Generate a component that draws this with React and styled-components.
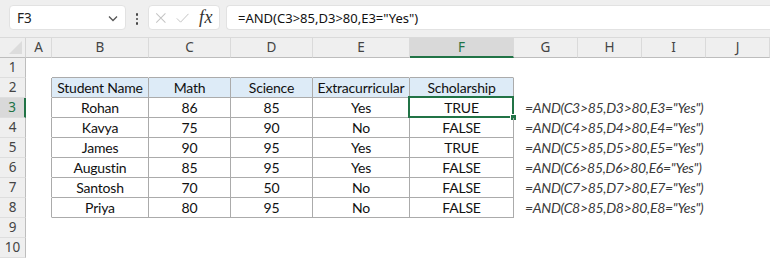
import styled, { createGlobalStyle, css } from 'styled-components';

const GREEN = '#217346';
const COLS = '26px 26px 97px 82px 82px 97px 104px 64px 64px 64px 64px';
const LETTERS = ['A', 'B', 'C', 'D', 'E', 'F', 'G', 'H', 'I', 'J'];

const GlobalStyle = createGlobalStyle`
  html, body {
    margin: 0;
    padding: 0;
    background: #ffffff;
  }
`;

const Page = styled.div`
  width: 770px;
  height: 258px;
  overflow: hidden;
  background: #ffffff;
  font-family: 'Noto Sans', 'Open Sans', sans-serif;
`;

const Toolbar = styled.div`
  display: flex;
  align-items: flex-start;
  height: 37px;
  box-sizing: border-box;
  padding: 5px 0 0 9px;
  background: #efefef;
`;

const Box = styled.div`
  display: flex;
  align-items: center;
  height: 25px;
  box-sizing: border-box;
  background: #ffffff;
  border: 1px solid #e2e2e2;
  border-radius: 4px;
`;

const NameBox = styled(Box)`
  width: 117px;
  padding: 0 6px 0 7px;
  justify-content: space-between;
  font-size: 13.5px;
  color: #222;
`;

const Dots = styled.div`
  width: 22px;
  display: flex;
  flex-direction: column;
  align-items: center;
  gap: 2px;
  padding-top: 8px;
  span {
    width: 2.5px;
    height: 2.5px;
    border-radius: 50%;
    background: #444;
  }
`;

const FxBox = styled(Box)`
  width: 72px;
  padding: 0 6px;
  gap: 9px;
`;

const Fx = styled.span`
  font-family: 'Liberation Serif', serif;
  font-style: italic;
  font-size: 18px;
  color: #333;
  margin-left: 1px;
  letter-spacing: 0.5px;
`;

const FormulaBox = styled(Box)`
  flex: 1;
  margin-left: 6px;
  padding-left: 11px;
  font-size: 13px;
  color: #111;
  border-right: none;
  border-radius: 4px 0 0 4px;
`;

const HeaderRow = styled.div`
  display: grid;
  grid-template-columns: ${COLS};
  border-top: 1px solid #dadada;
  background: #efefef;
`;

const Row = styled.div`
  display: grid;
  grid-template-columns: ${COLS};
`;

const Corner = styled.div`
  position: relative;
  height: 20px;
  box-sizing: border-box;
  border-right: 1px solid #d4d4d4;
  border-bottom: 1px solid #bdbdbd;
  &::after {
    content: '';
    position: absolute;
    right: 3px;
    bottom: 3px;
    border-left: 13px solid transparent;
    border-bottom: 13px solid #dcdcdc;
  }
`;

const ColHead = styled.div`
  height: 20px;
  box-sizing: border-box;
  border-right: 1px solid #dadada;
  border-bottom: 1px solid #bdbdbd;
  text-align: center;
  font-size: 13.5px;
  line-height: 19px;
  color: #444;
  ${(p) => p.$active && css`
    background: #d9d9d9;
    color: ${GREEN};
    border-bottom: 2px solid ${GREEN};
  `}
`;

const RowHead = styled.div`
  height: 20px;
  box-sizing: border-box;
  background: #efefef;
  border-right: 1px solid #bdbdbd;
  border-bottom: 1px solid #dedede;
  text-align: center;
  font-size: 13.5px;
  line-height: 19px;
  color: #444;
  ${(p) => p.$active && css`
    background: #d9d9d9;
    color: ${GREEN};
    border-right: 2px solid ${GREEN};
  `}
`;

const Cell = styled.div`
  position: relative;
  height: 20px;
  box-sizing: border-box;
  border-right: 1px solid ${(p) => (p.$r ? '#ababab' : 'transparent')};
  border-bottom: 1px solid ${(p) => (p.$b ? '#ababab' : 'transparent')};
  background: ${(p) => (p.$fill ? '#ddebf7' : 'transparent')};
  font-family: 'Lato', 'Carlito', sans-serif;
  font-size: 14px;
  letter-spacing: -0.2px;
  line-height: 20px;
  color: #111;
  text-align: center;
  white-space: nowrap;
`;

const FormulaText = styled(Cell)`
  text-align: left;
  padding-left: 11px;
  font-style: italic;
  letter-spacing: -0.3px;
  color: #3a3a3a;
  overflow: visible;
  z-index: 1;
`;

const Selection = styled.div`
  position: absolute;
  left: -2px;
  top: -2px;
  right: -1px;
  bottom: -1px;
  border: 2px solid ${GREEN};
  pointer-events: none;
  &::after {
    content: '';
    position: absolute;
    right: -5px;
    bottom: -5px;
    width: 5px;
    height: 5px;
    background: ${GREEN};
    border: 1px solid #fff;
  }
`;

const header = ['Student Name', 'Math', 'Science', 'Extracurricular', 'Scholarship'];
const data = [
  ['Rohan', 86, 85, 'Yes', 'TRUE'],
  ['Kavya', 75, 90, 'No', 'FALSE'],
  ['James', 90, 95, 'Yes', 'TRUE'],
  ['Augustin', 85, 95, 'Yes', 'FALSE'],
  ['Santosh', 70, 50, 'No', 'FALSE'],
  ['Priya', 80, 95, 'No', 'FALSE'],
];

const Chevron = () => (
  <svg width="12" height="12" viewBox="0 0 12 12" fill="none">
    <path d="M2 4.5 L6 8.5 L10 4.5" stroke="#555" strokeWidth="1.3" />
  </svg>
);

const Cross = () => (
  <svg width="14" height="14" viewBox="0 0 14 14" fill="none">
    <path d="M1.5 1.5 L12.5 12.5 M12.5 1.5 L1.5 12.5" stroke="#c4c4c4" strokeWidth="1.2" />
  </svg>
);

const Check = () => (
  <svg width="16" height="14" viewBox="0 0 16 14" fill="none">
    <path d="M1 7.5 L5.5 12 L15 2" stroke="#c4c4c4" strokeWidth="1.2" />
  </svg>
);

const Empty = ({ n }) => Array.from({ length: n }, (_, i) => <Cell key={`e${i}`} />);

const App = () => {
  const rows = [];
  for (let r = 1; r <= 10; r++) {
    const cells = [];
    if (r === 1) {
      cells.push(<Cell key="a" />);
      for (let c = 0; c < 5; c++) cells.push(<Cell key={c} $b />);
      cells.push(<Empty key="rest" n={4} />);
    } else if (r === 2) {
      cells.push(<Cell key="a" $r />);
      header.forEach((h) => cells.push(<Cell key={h} $r $b $fill>{h}</Cell>));
      cells.push(<Empty key="rest" n={4} />);
    } else if (r <= 8) {
      const d = data[r - 3];
      cells.push(<Cell key="a" $r />);
      d.forEach((v, i) => (
        cells.push(
          <Cell key={i} $r $b>
            {v}
            {r === 3 && i === 4 ? <Selection /> : null}
          </Cell>
        )
      ));
      cells.push(<FormulaText key="f">{`=AND(C${r}>85,D${r}>80,E${r}="Yes")`}</FormulaText>);
      cells.push(<Empty key="rest" n={3} />);
    } else {
      cells.push(<Empty key="rest" n={10} />);
    }
    rows.push(
      <Row key={r}>
        <RowHead $active={r === 3}>{r}</RowHead>
        {cells}
      </Row>
    );
  }

  return (
    <Page>
      <GlobalStyle />
      <Toolbar>
        <NameBox>
          <span>F3</span>
          <Chevron />
        </NameBox>
        <Dots><span /><span /><span /></Dots>
        <FxBox>
          <Cross />
          <Check />
          <Fx>fx</Fx>
        </FxBox>
        <FormulaBox>=AND(C3&gt;85,D3&gt;80,E3="Yes")</FormulaBox>
      </Toolbar>
      <HeaderRow>
        <Corner />
        {LETTERS.map((l) => <ColHead key={l} $active={l === 'F'}>{l}</ColHead>)}
      </HeaderRow>
      {rows}
    </Page>
  );
};

export default App;
